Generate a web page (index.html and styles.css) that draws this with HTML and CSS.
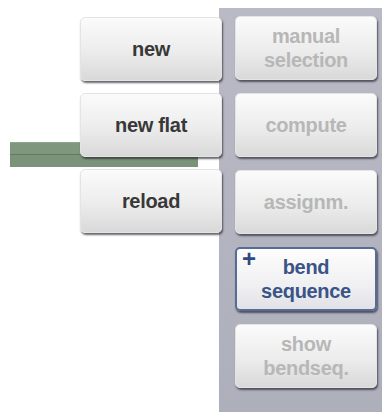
FILE: index.html
```html
<!DOCTYPE html>
<html lang="en">
<head>
  <meta charset="UTF-8">
  <title>Bend tools</title>
  <link rel="stylesheet" href="styles.css">
</head>
<body>
  <div class="screen">
    <div class="left">
      <div class="track"></div>
      <button class="btn">new</button>
      <button class="btn">new flat</button>
      <button class="btn">reload</button>
    </div>
    <div class="panel">
      <button class="btn off">manual<br>selection</button>
      <button class="btn off">compute</button>
      <button class="btn off">assignm.</button>
      <button class="btn active"><span class="plus">+</span>bend<br>sequence</button>
      <button class="btn off">show<br>bendseq.</button>
    </div>
  </div>
</body>
</html>
```

FILE: styles.css
```css
body {
  margin: 0;
  background: #ffffff;
  font-family: "Liberation Sans", Arial, sans-serif;
}

.screen {
  display: flex;
  width: 382px;
  height: 412px;
  overflow: hidden;
}

.left {
  position: relative;
  z-index: 1;
  width: 219px;
  box-sizing: border-box;
  padding: 17px 0 0 80px;
  display: flex;
  flex-direction: column;
  gap: 12px;
}

/* green strip behind the buttons */
.track {
  position: absolute;
  left: 10px;
  top: 142px;
  width: 188px;
  height: 25px;
  background: #7b9479;
  border-top: 1px solid #90a58e;
  box-sizing: border-box;
  box-shadow: inset 0 11px 0 #7f977d, inset 0 12px 0 #627a61;
}

.panel {
  flex: 1;
  margin-top: 8px;
  padding: 8px 5px 0 16px;
  background: linear-gradient(#b9bac6, #adafbb);
  display: flex;
  flex-direction: column;
  gap: 13px;
}

.btn {
  position: relative;
  width: 142px;
  height: 64px;
  flex: none;
  border: 1px solid #e4e4e4;
  border-radius: 5px;
  background: linear-gradient(#fbfbfb, #ececec 55%, #d9d9d9);
  box-shadow: 1px 2px 2px rgba(40, 40, 50, 0.7);
  font-family: "Liberation Sans", Arial, sans-serif;
  font-weight: bold;
  font-size: 20px;
  line-height: 24px;
  color: #383838;
  letter-spacing: -0.3px;
  padding: 0;
}

.off {
  color: #b7b7b7;
}

.active {
  color: #3a5488;
  border: 2px solid #566c98;
  background: linear-gradient(#fdfdfd, #f0f0f2 60%, #e2e2e6);
}

.plus {
  position: absolute;
  left: 5px;
  top: -2px;
  font-size: 24px;
  color: #2e4a80;
}
```
